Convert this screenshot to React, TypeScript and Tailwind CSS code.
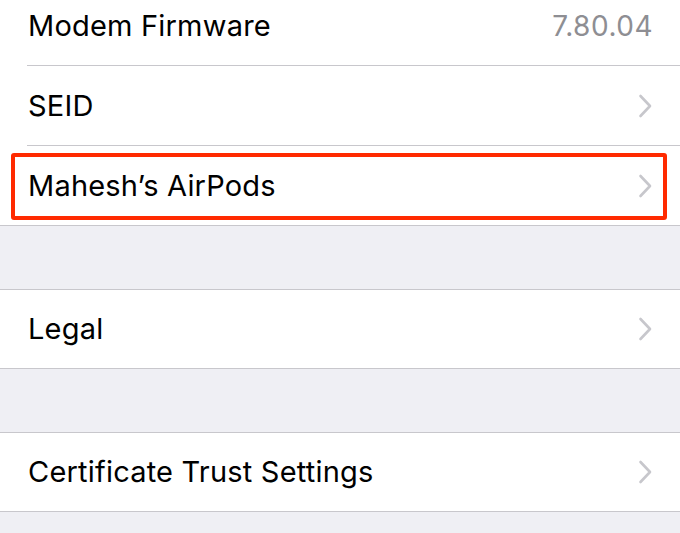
type RowProps = {
  label: string;
  value?: string;
  chevron?: boolean;
  highlight?: boolean;
  className?: string;
};

function Chevron() {
  return (
    <svg width="15" height="24" viewBox="0 0 15 24" fill="none" className="shrink-0">
      <path d="M2.5 2 L12 12 L2.5 22" stroke="#c7c7cc" strokeWidth="2.6" strokeLinecap="round" strokeLinejoin="round" />
    </svg>
  );
}

// full-width row, used at the end of a group
function Row({ label, value, chevron, highlight, className = "" }: RowProps) {
  return (
    <div className={`relative bg-white h-[80px] flex items-center pl-[28px] pr-[27px] ${className}`}>
      {highlight && (
        <div className="absolute left-[11px] right-[13px] top-[7px] bottom-[5px] border-[4px] border-[#ff2a00] rounded-[3px] pointer-events-none" />
      )}
      <span className="flex-1 text-[29px] text-black tracking-[0.2px]">{label}</span>
      {value && <span className="text-[28px] text-[#8e8e93] tracking-[0.5px]">{value}</span>}
      {chevron && <Chevron />}
    </div>
  );
}

// row with the separator inset from the left
function InsetRow({ label, value, chevron }: RowProps) {
  return (
    <div className="bg-white h-[80px] flex">
      <div className="flex-1 ml-[27px] border-b border-[#c8c7cc] flex items-center pl-[1px] pr-[27px]">
        <span className="flex-1 text-[29px] text-black tracking-[0.2px]">{label}</span>
        {value && <span className="text-[28px] text-[#8e8e93] tracking-[0.5px]">{value}</span>}
        {chevron && <Chevron />}
      </div>
    </div>
  );
}

export default function App() {
  return (
    <div className="w-[680px] h-[533px] overflow-hidden bg-[#efeff4] font-['Inter','Liberation_Sans',sans-serif]">
      <div className="-mt-[14px]">
        <InsetRow label="Modem Firmware" value="7.80.04" />
        <InsetRow label="SEID" chevron />
        <Row label="Mahesh’s AirPods" chevron highlight className="border-b border-[#c8c7cc]" />
      </div>
      <div className="h-[63px]" />
      <Row label="Legal" chevron className="border-y border-[#c8c7cc]" />
      <div className="h-[63px]" />
      <Row label="Certificate Trust Settings" chevron className="border-y border-[#c8c7cc]" />
    </div>
  );
}
